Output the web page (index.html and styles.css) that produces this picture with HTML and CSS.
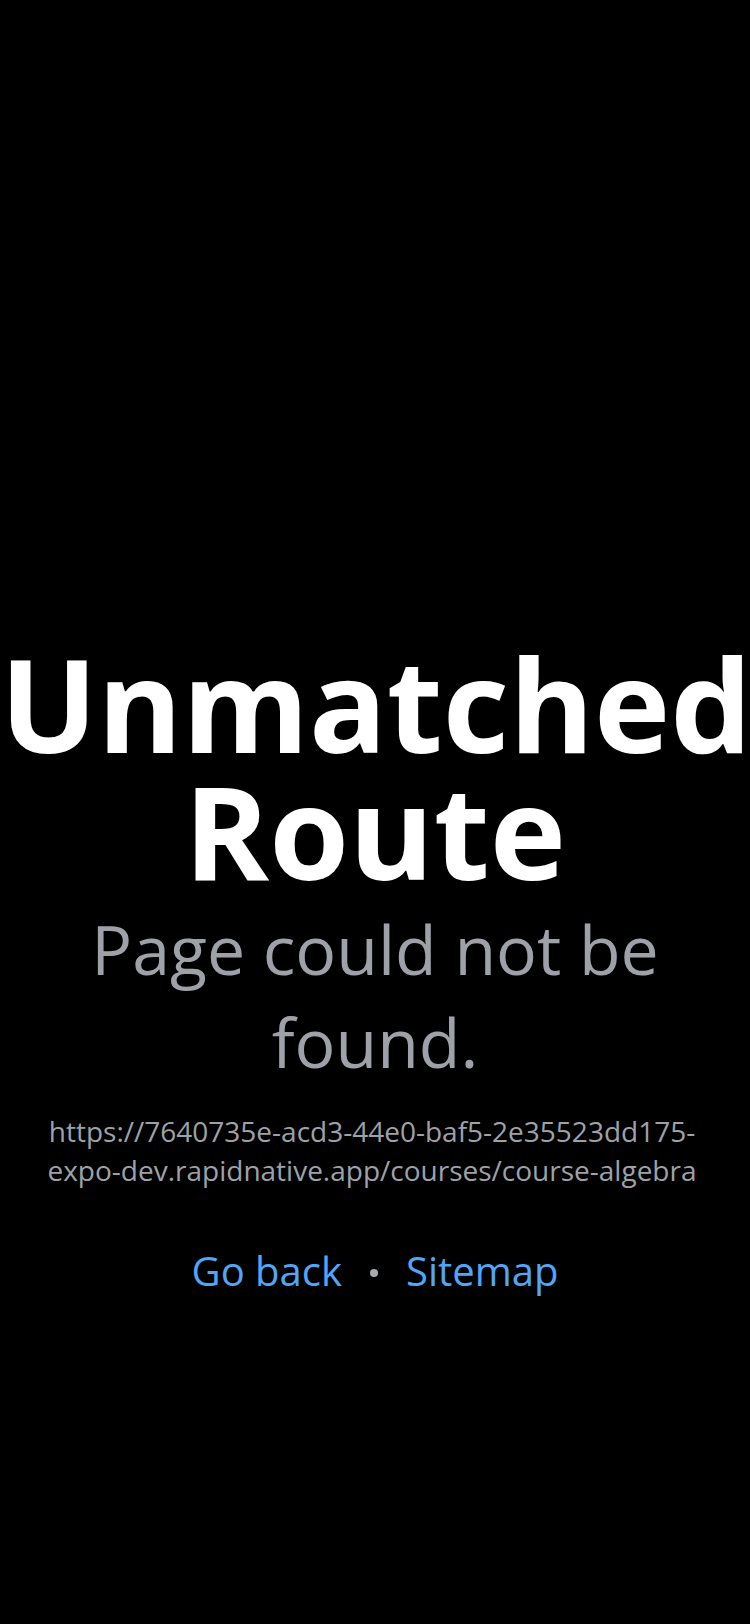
FILE: index.html
```html
<!DOCTYPE html>
<html lang="en">
<head>
  <meta charset="UTF-8" />
  <meta name="viewport" content="width=device-width, initial-scale=1.0" />
  <title>Unmatched Route</title>
  <link rel="stylesheet" href="styles.css">
</head>
<body>

  <main class="unmatched">
    <h1 class="title">Unmatched Route</h1>
    <h2 class="subtitle">Page could not be found.</h2>
    <p class="route-url">https://7640735e-acd3-44e0-baf5-2e35523dd175-expo-dev.rapidnative.app/courses/course-algebra</p>

    <nav class="links">
      <a href="#" class="link">Go back</a>
      <span class="dot"></span>
      <a href="#" class="link">Sitemap</a>
    </nav>
  </main>

</body>
</html>
```

FILE: styles.css
```css
:root {
  --bg: #000;
  --title: #fff;
  --muted: #9ea2a8;
  --link: #52a6f6;
}

* {
  margin: 0;
  padding: 0;
  box-sizing: border-box;
}

body {
  background: var(--bg);
  font-family: 'Open Sans', 'Noto Sans', sans-serif;
  width: 750px;
  min-height: 1624px;
}

.unmatched {
  display: flex;
  flex-direction: column;
  align-items: center;
  padding: 640px 0 0;
  text-align: center;
}

.title {
  color: var(--title);
  font-size: 129px;
  line-height: 127px;
  font-weight: 700;
  width: 750px;
}

.subtitle {
  color: var(--muted);
  font-size: 68px;
  line-height: 93px;
  font-weight: 400;
  margin-top: 8px;
  width: 640px;
}

.route-url {
  color: var(--muted);
  font-size: 28px;
  line-height: 39px;
  margin-top: 24px;
  width: 660px;
  margin-right: 6px;
}

.links {
  display: flex;
  align-items: center;
  gap: 28px;
  margin-top: 54px;
  font-size: 40px;
  line-height: 54px;
}

.link {
  color: var(--link);
  text-decoration: none;
}

.dot {
  width: 8px;
  height: 8px;
  border-radius: 50%;
  background: #a8abb0;
  margin-top: 4px;
}
```
